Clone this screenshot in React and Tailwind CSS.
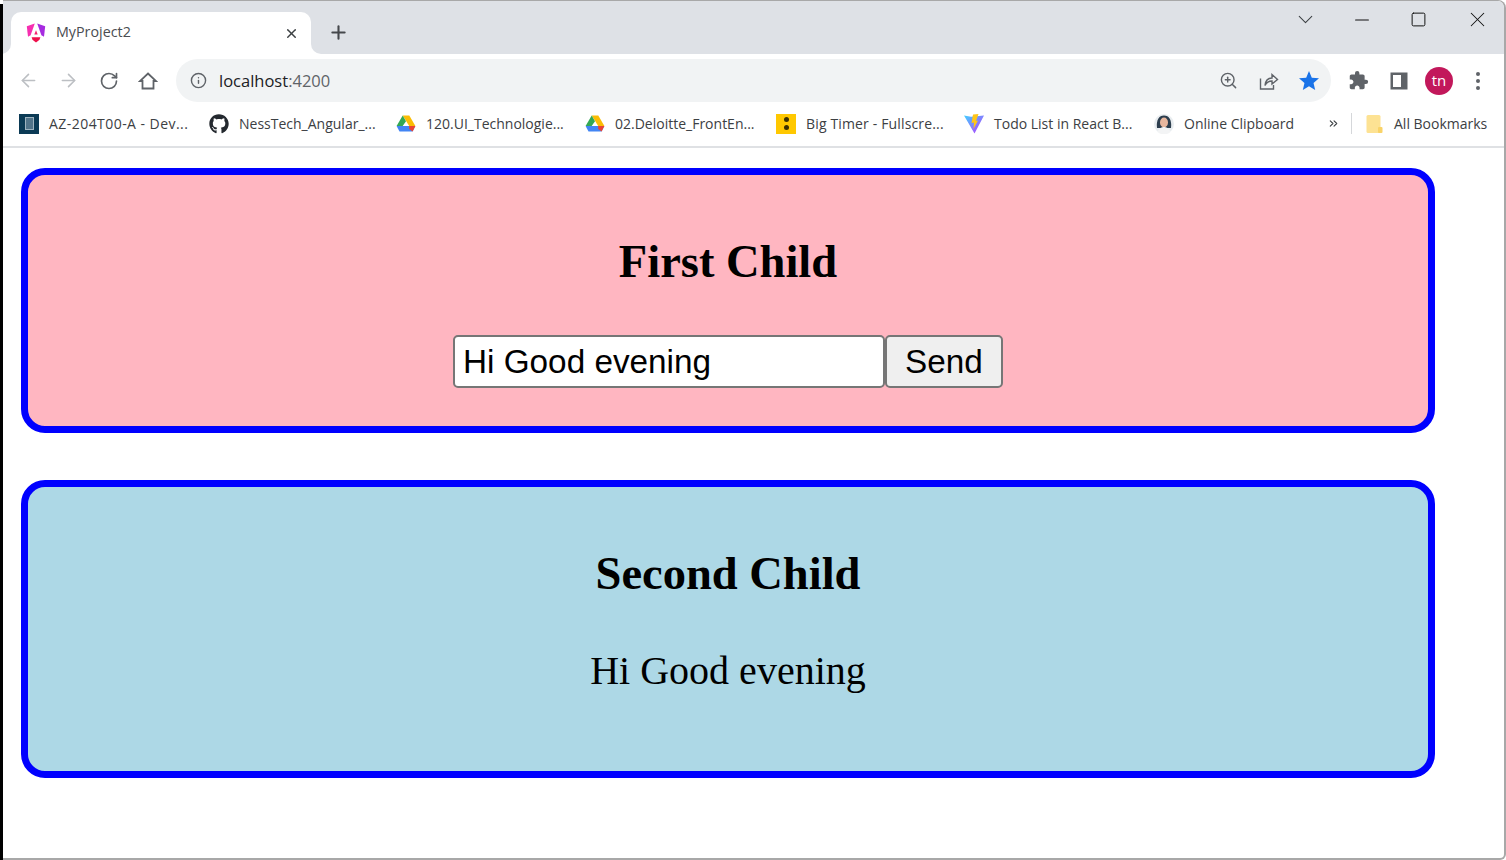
import React from "react";
import { ArrowLeft, ArrowRight, RotateCw, Info, ZoomIn, Plus, X, Minus, Square, ChevronDown, ChevronsRight } from "lucide-react";
import { FaGithub } from "react-icons/fa";
import { MdExtension, MdStar } from "react-icons/md";

function AngularLogo() {
  return (
    <svg width="20" height="20" viewBox="0 0 20 20">
      <path d="M8.800 0.500 0.800 3.300 2 13.800 4.600 12.200 8.800 0.500z" fill="#f62fb0" />
      <path d="M11.200 0.500 19.200 3.300 18 13.800 15.400 12.200 11.200 0.500z" fill="#a62be0" />
      <path d="M10 2.500 14.500 13H12.700L12 14.800H8L7.300 13H5.500z" fill="#fff" />
      <path d="M10 7.200 11.700 11.600H8.300z" fill="#f61f6b" />
      <path d="M5.600 14.200H14.400L13.500 16.800 10 19.500 6.500 16.800z" fill="#ee0f4b" />
    </svg>
  );
}

function DriveLogo() {
  return (
    <svg width="20" height="18" viewBox="0 0 20 18">
      <path d="M6.700 0.500H13.300L19.400 11H13.200z" fill="#fbbc04" />
      <path d="M0.600 11H19.400L16.600 16.500H3.500z" fill="#4285f4" />
      <path d="M13.200 11H19.400L16.600 16.500 13.200 14z" fill="#ea4335" />
      <path d="M6.700 0.500 10 6.200 6.700 11H0.600z" fill="#34a853" />
    </svg>
  );
}

function ViteLogo() {
  return (
    <svg width="20" height="20" viewBox="0 0 20 20">
      <defs>
        <linearGradient id="vt" x1="0" y1="0" x2="1" y2="1">
          <stop offset="0" stopColor="#41d1ff" />
          <stop offset="1" stopColor="#bd34fe" />
        </linearGradient>
      </defs>
      <path d="M0 1.500 7 2.800 10 2.400 20 1.500 10.500 19.500z" fill="url(#vt)" />
      <path d="M9 0.500 14.500 0 12 7 14 6.500 9.500 15 10 8.500 7.500 9z" fill="#ffc517" />
    </svg>
  );
}

function AvatarIcon() {
  return (
    <svg width="20" height="20" viewBox="0 0 20 20">
      <circle cx="10" cy="10" r="10" fill="#e9edf0" />
      <path d="M3 14C2 6 5 1.500 10 1.500S18 6 17 14L14 14H6z" fill="#2d3e4e" />
      <ellipse cx="10" cy="8.500" rx="4" ry="5" fill="#e8b79e" />
      <path d="M3.500 18C5 14 8 13 10 13S15 14 16.500 18A10 10 0 0 1 3.500 18z" fill="#f3f4f5" />
    </svg>
  );
}

function HomeIcon() {
  return (
    <svg width="20" height="20" viewBox="0 0 20 20" fill="none" stroke="#5f6368" strokeWidth="1.800">
      <path d="M10 2.500 18 10H15.500V17.500H4.500V10H2z" strokeLinejoin="miter" />
    </svg>
  );
}

function ShareIcon() {
  return (
    <svg width="20" height="20" viewBox="0 0 20 20" fill="none" stroke="#5f6368" strokeWidth="1.400">
      <path d="M1.500 7.500V18H14.500V14" />
      <path d="M6 14.500C6.500 9.500 9.500 7 13 7V3.500L18.500 8.500 13 13V10C10 10 7.500 11.500 6 14.500z" />
    </svg>
  );
}

function SidePanelIcon() {
  return (
    <svg width="18" height="18" viewBox="0 0 18 18">
      <path d="M0.500 0.500H17.500V17.500H0.500zM3 3V15H11V3z" fill="#5f6368" fillRule="evenodd" />
    </svg>
  );
}

function FolderIcon() {
  return (
    <svg width="18" height="20" viewBox="0 0 18 20">
      <rect x="0.500" y="1" width="14" height="18" rx="1.500" fill="#fde293" />
      <rect x="12" y="13" width="4.500" height="6" rx="1" fill="#f9d368" />
    </svg>
  );
}

const bookmarks = [
  { title: "AZ-204T00-A - Dev...", width: "w-[140px] tracking-[0.45px]", icon: <span className="flex h-5 w-5 items-center justify-center bg-[#0b3a55]"><span className="h-[13px] w-[9px] border border-[#9fb4c0] bg-[#52748a]" /></span> },
  { title: "NessTech_Angular_...", width: "w-[137px]", icon: <FaGithub className="h-5 w-5 text-[#24292f]" /> },
  { title: "120.UI_Technologie...", width: "w-[139px]", icon: <DriveLogo /> },
  { title: "02.Deloitte_FrontEn...", width: "w-[141px]", icon: <DriveLogo /> },
  { title: "Big Timer - Fullscre...", width: "w-[138px] tracking-[0.15px]", icon: <span className="flex h-5 w-5 flex-col items-center justify-center gap-[3px] bg-[#ffc800]"><span className="h-[5px] w-[5px] rounded-full bg-[#3a2f00]" /><span className="h-[5px] w-[5px] rounded-full bg-[#3a2f00]" /></span> },
  { title: "Todo List in React B...", width: "w-[140px]", icon: <ViteLogo /> },
  { title: "Online Clipboard", width: "w-[112px]", icon: <AvatarIcon /> },
];

function Tab() {
  return (
    <div className="relative ml-[8px] mt-[11px] flex h-[42px] w-[300px] items-center rounded-t-[10px] bg-white pl-[15px] pr-[12px]">
      <span className="absolute bottom-0 left-[-10px] h-[10px] w-[10px] bg-white">
        <span className="block h-full w-full rounded-br-[10px] bg-[#dee1e6]" />
      </span>
      <span className="absolute bottom-0 right-[-10px] h-[10px] w-[10px] bg-white">
        <span className="block h-full w-full rounded-bl-[10px] bg-[#dee1e6]" />
      </span>
      <AngularLogo />
      <span className="ml-[10px] flex-1 pb-[2px] text-[14.300px] text-[#4a4d51]">MyProject2</span>
      <X size={15} strokeWidth={2.4} className="text-[#3c4043]" />
    </div>
  );
}

function TitleBar() {
  return (
    <div className="flex h-[53px] shrink-0 items-start bg-[#dee1e6]">
      <Tab />
      <Plus size={21} strokeWidth={2.4} className="ml-[17px] mt-[21px] text-[#45484c]" />
      <div className="flex-1" />
      <ChevronDown size={25} strokeWidth={1} className="mr-[33px] mt-[6px] text-[#3c4043]" />
      <Minus size={22} strokeWidth={1.100} className="mr-[37px] mt-[8px] text-[#111]" />
      <Square size={17} strokeWidth={1.400} className="mr-[38px] mt-[10px] text-[#111]" />
      <X size={25} strokeWidth={1} className="mr-[14px] mt-[6px] text-[#111]" />
    </div>
  );
}

function Toolbar() {
  return (
    <div className="flex h-[53px] shrink-0 items-center bg-white">
      <ArrowLeft size={21} strokeWidth={1.800} className="ml-[15px] text-[#bcbfc3]" />
      <ArrowRight size={21} strokeWidth={1.800} className="ml-[19px] text-[#bcbfc3]" />
      <RotateCw size={20} strokeWidth={2} className="ml-[20px] text-[#5f6368]" />
      <span className="ml-[19px]"><HomeIcon /></span>
      <div className="ml-[18px] flex h-[43px] w-[1155px] items-center rounded-full bg-[#f1f3f4] pl-[14px] pr-[10px]">
        <Info size={17} strokeWidth={2} className="text-[#5f6368]" />
        <span className="ml-[12px] flex-1 pt-px text-[16.500px] text-[#202124]">
          localhost<span className="text-[#5f6368]">:4200</span>
        </span>
        <ZoomIn size={19} strokeWidth={1.800} className="text-[#5f6368]" />
        <span className="ml-[21px]"><ShareIcon /></span>
        <MdStar className="ml-[18px] h-[24px] w-[24px] text-[#1a73e8]" />
      </div>
      <MdExtension className="ml-[17px] h-[21px] w-[21px] text-[#5f6368]" />
      <span className="ml-[21px]"><SidePanelIcon /></span>
      <span className="ml-[17px] flex h-7 w-7 items-center justify-center rounded-full bg-[#c2185b] pb-px text-[15px] text-white">tn</span>
      <span className="ml-[23px] flex flex-col gap-[3px]">
        <span className="h-[4px] w-[4px] rounded-full bg-[#5f6368]" />
        <span className="h-[4px] w-[4px] rounded-full bg-[#5f6368]" />
        <span className="h-[4px] w-[4px] rounded-full bg-[#5f6368]" />
      </span>
    </div>
  );
}

function BookmarksBar() {
  return (
    <div className="flex h-[41px] shrink-0 items-center border-b-2 border-[#dfe1e4] bg-white pb-[6px] pl-[16px] text-[14px] text-[#3c4043]">
      {bookmarks.map((b) => (
        <div key={b.title} className="mr-[20px] flex items-center">
          <span className="flex w-5 justify-center">{b.icon}</span>
          <span className={`ml-[10px] whitespace-nowrap ${b.width}`}>{b.title}</span>
        </div>
      ))}
      <ChevronsRight size={13} strokeWidth={2} className="ml-[11px] text-[#3c4043]" />
      <span className="ml-[11px] h-[21px] w-px bg-[#d5d7da]" />
      <span className="ml-[14px]"><FolderIcon /></span>
      <span className="ml-[10px] whitespace-nowrap">All Bookmarks</span>
    </div>
  );
}

export default function App() {
  return (
    <div className="flex h-[860px] w-[1506px] overflow-hidden bg-white font-['Liberation_Serif',serif]">
      <div className="mt-[4px] w-[3px] shrink-0 bg-black" />
      <div className="flex min-w-0 flex-1 flex-col overflow-hidden rounded-tr-[8px] rounded-br-[6px] border-t border-r-2 border-b-2 border-[#a8a8a8]">
        <div className="flex shrink-0 flex-col font-['Open_Sans',sans-serif]">
          <TitleBar />
          <Toolbar />
          <BookmarksBar />
        </div>
        <main className="flex w-[1432px] flex-col gap-[47px] pl-[18px] pt-[20px] text-black">
          <section className="flex h-[265px] flex-col items-center rounded-3xl border-[7px] border-[#0000ff] bg-[#ffb6c1]">
            <h1 className="mt-[59px] text-[46.500px] font-bold leading-[55px]">First Child</h1>
            <div className="mt-[46px] flex items-center font-['Liberation_Sans',sans-serif] text-[33.300px]">
              <input
                readOnly
                value="Hi Good evening"
                className="h-[53px] w-[432px] rounded-[5px] border-2 border-[#767676] bg-white px-[8px] text-black outline-none"
              />
              <button className="h-[53px] w-[118px] rounded-[5px] border-2 border-[#767676] bg-[#efefef]">Send</button>
            </div>
          </section>
          <section className="flex h-[298px] flex-col items-center rounded-3xl border-[7px] border-[#0000ff] bg-[#add8e6]">
            <h1 className="mt-[59px] text-[46.500px] font-bold leading-[55px]">Second Child</h1>
            <p className="mt-[47px] text-[40px] leading-[46px]">Hi Good evening</p>
          </section>
        </main>
      </div>
    </div>
  );
}
